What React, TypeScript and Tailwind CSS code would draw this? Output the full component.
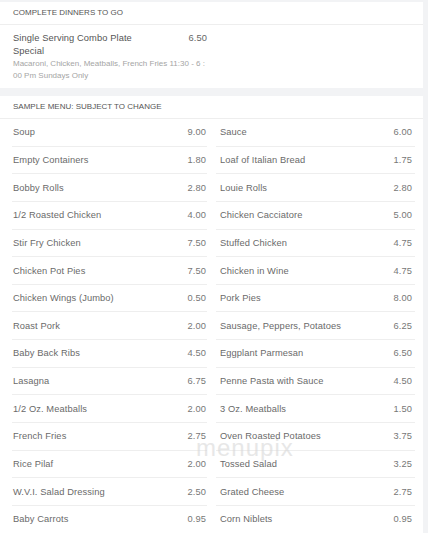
import React from "react";

const rows: [string, string, string, string][] = [
  ["Soup", "9.00", "Sauce", "6.00"],
  ["Empty Containers", "1.80", "Loaf of Italian Bread", "1.75"],
  ["Bobby Rolls", "2.80", "Louie Rolls", "2.80"],
  ["1/2 Roasted Chicken", "4.00", "Chicken Cacciatore", "5.00"],
  ["Stir Fry Chicken", "7.50", "Stuffed Chicken", "4.75"],
  ["Chicken Pot Pies", "7.50", "Chicken in Wine", "4.75"],
  ["Chicken Wings (Jumbo)", "0.50", "Pork Pies", "8.00"],
  ["Roast Pork", "2.00", "Sausage, Peppers, Potatoes", "6.25"],
  ["Baby Back Ribs", "4.50", "Eggplant Parmesan", "6.50"],
  ["Lasagna", "6.75", "Penne Pasta with Sauce", "4.50"],
  ["1/2 Oz. Meatballs", "2.00", "3 Oz. Meatballs", "1.50"],
  ["French Fries", "2.75", "Oven Roasted Potatoes", "3.75"],
  ["Rice Pilaf", "2.00", "Tossed Salad", "3.25"],
  ["W.V.I. Salad Dressing", "2.50", "Grated Cheese", "2.75"],
  ["Baby Carrots", "0.95", "Corn Niblets", "0.95"],
];

function Row({ name, price, right }: { name: string; price: string; right?: boolean }) {
  return (
    <div
      className={
        right
          ? "flex h-[27.65px] items-center justify-between border-b border-[#eeeeee] pt-[2px] pr-[3px] pl-[4px]"
          : "flex h-[27.65px] items-center justify-between border-b border-[#eeeeee] pt-[2px] px-[1px]"
      }
    >
      <span className="text-[#6a6a6a]">{name}</span>
      <span className="text-[#777]">{price}</span>
    </div>
  );
}

export default function App() {
  return (
    <div
      className="relative min-h-[533px] overflow-hidden bg-[#f2f3f5] pt-[2px] pr-[5px] text-[9.3px] tracking-[0.1px]"
      style={{ fontFamily: '"Liberation Sans", Arial, sans-serif' }}
    >
      <div className="bg-white">
        <div className="flex h-[23px] items-center border-b border-[#eeeeee] px-[13px] text-[8px] tracking-normal text-[#555]">
          COMPLETE DINNERS TO GO
        </div>
        <div className="px-[13px] pt-[7px] pb-[6px]">
          <div className="flex w-[194px] items-start justify-between leading-[13px]">
            <span className="w-[150px] text-[#555]">Single Serving Combo Plate Special</span>
            <span className="text-[#666]">6.50</span>
          </div>
          <div className="w-[196px] text-[8px] leading-[12px] tracking-normal text-[#a5a5a5]">
            Macaroni, Chicken, Meatballs, French Fries 11:30 - 6 : 00 Pm Sundays Only
          </div>
        </div>
      </div>
      <div className="h-[8px]" />
      <div className="bg-white">
        <div className="flex h-[23px] items-center border-b border-[#eeeeee] px-[13px] text-[8px] tracking-normal text-[#555]">
          SAMPLE MENU: SUBJECT TO CHANGE
        </div>
        <div className="grid grid-cols-[195px_199px] gap-x-[9px] pl-[12px]">
          {rows.map(([a, ap, b, bp], i) => (
            <React.Fragment key={i}>
              <Row name={a} price={ap} />
              <Row name={b} price={bp} right />
            </React.Fragment>
          ))}
        </div>
      </div>
      <div className="pointer-events-none absolute left-[196px] top-[436px] text-[24px] leading-[24px] tracking-[1px] text-[#d8d8d8] opacity-60">
        menupix
      </div>
    </div>
  );
}
